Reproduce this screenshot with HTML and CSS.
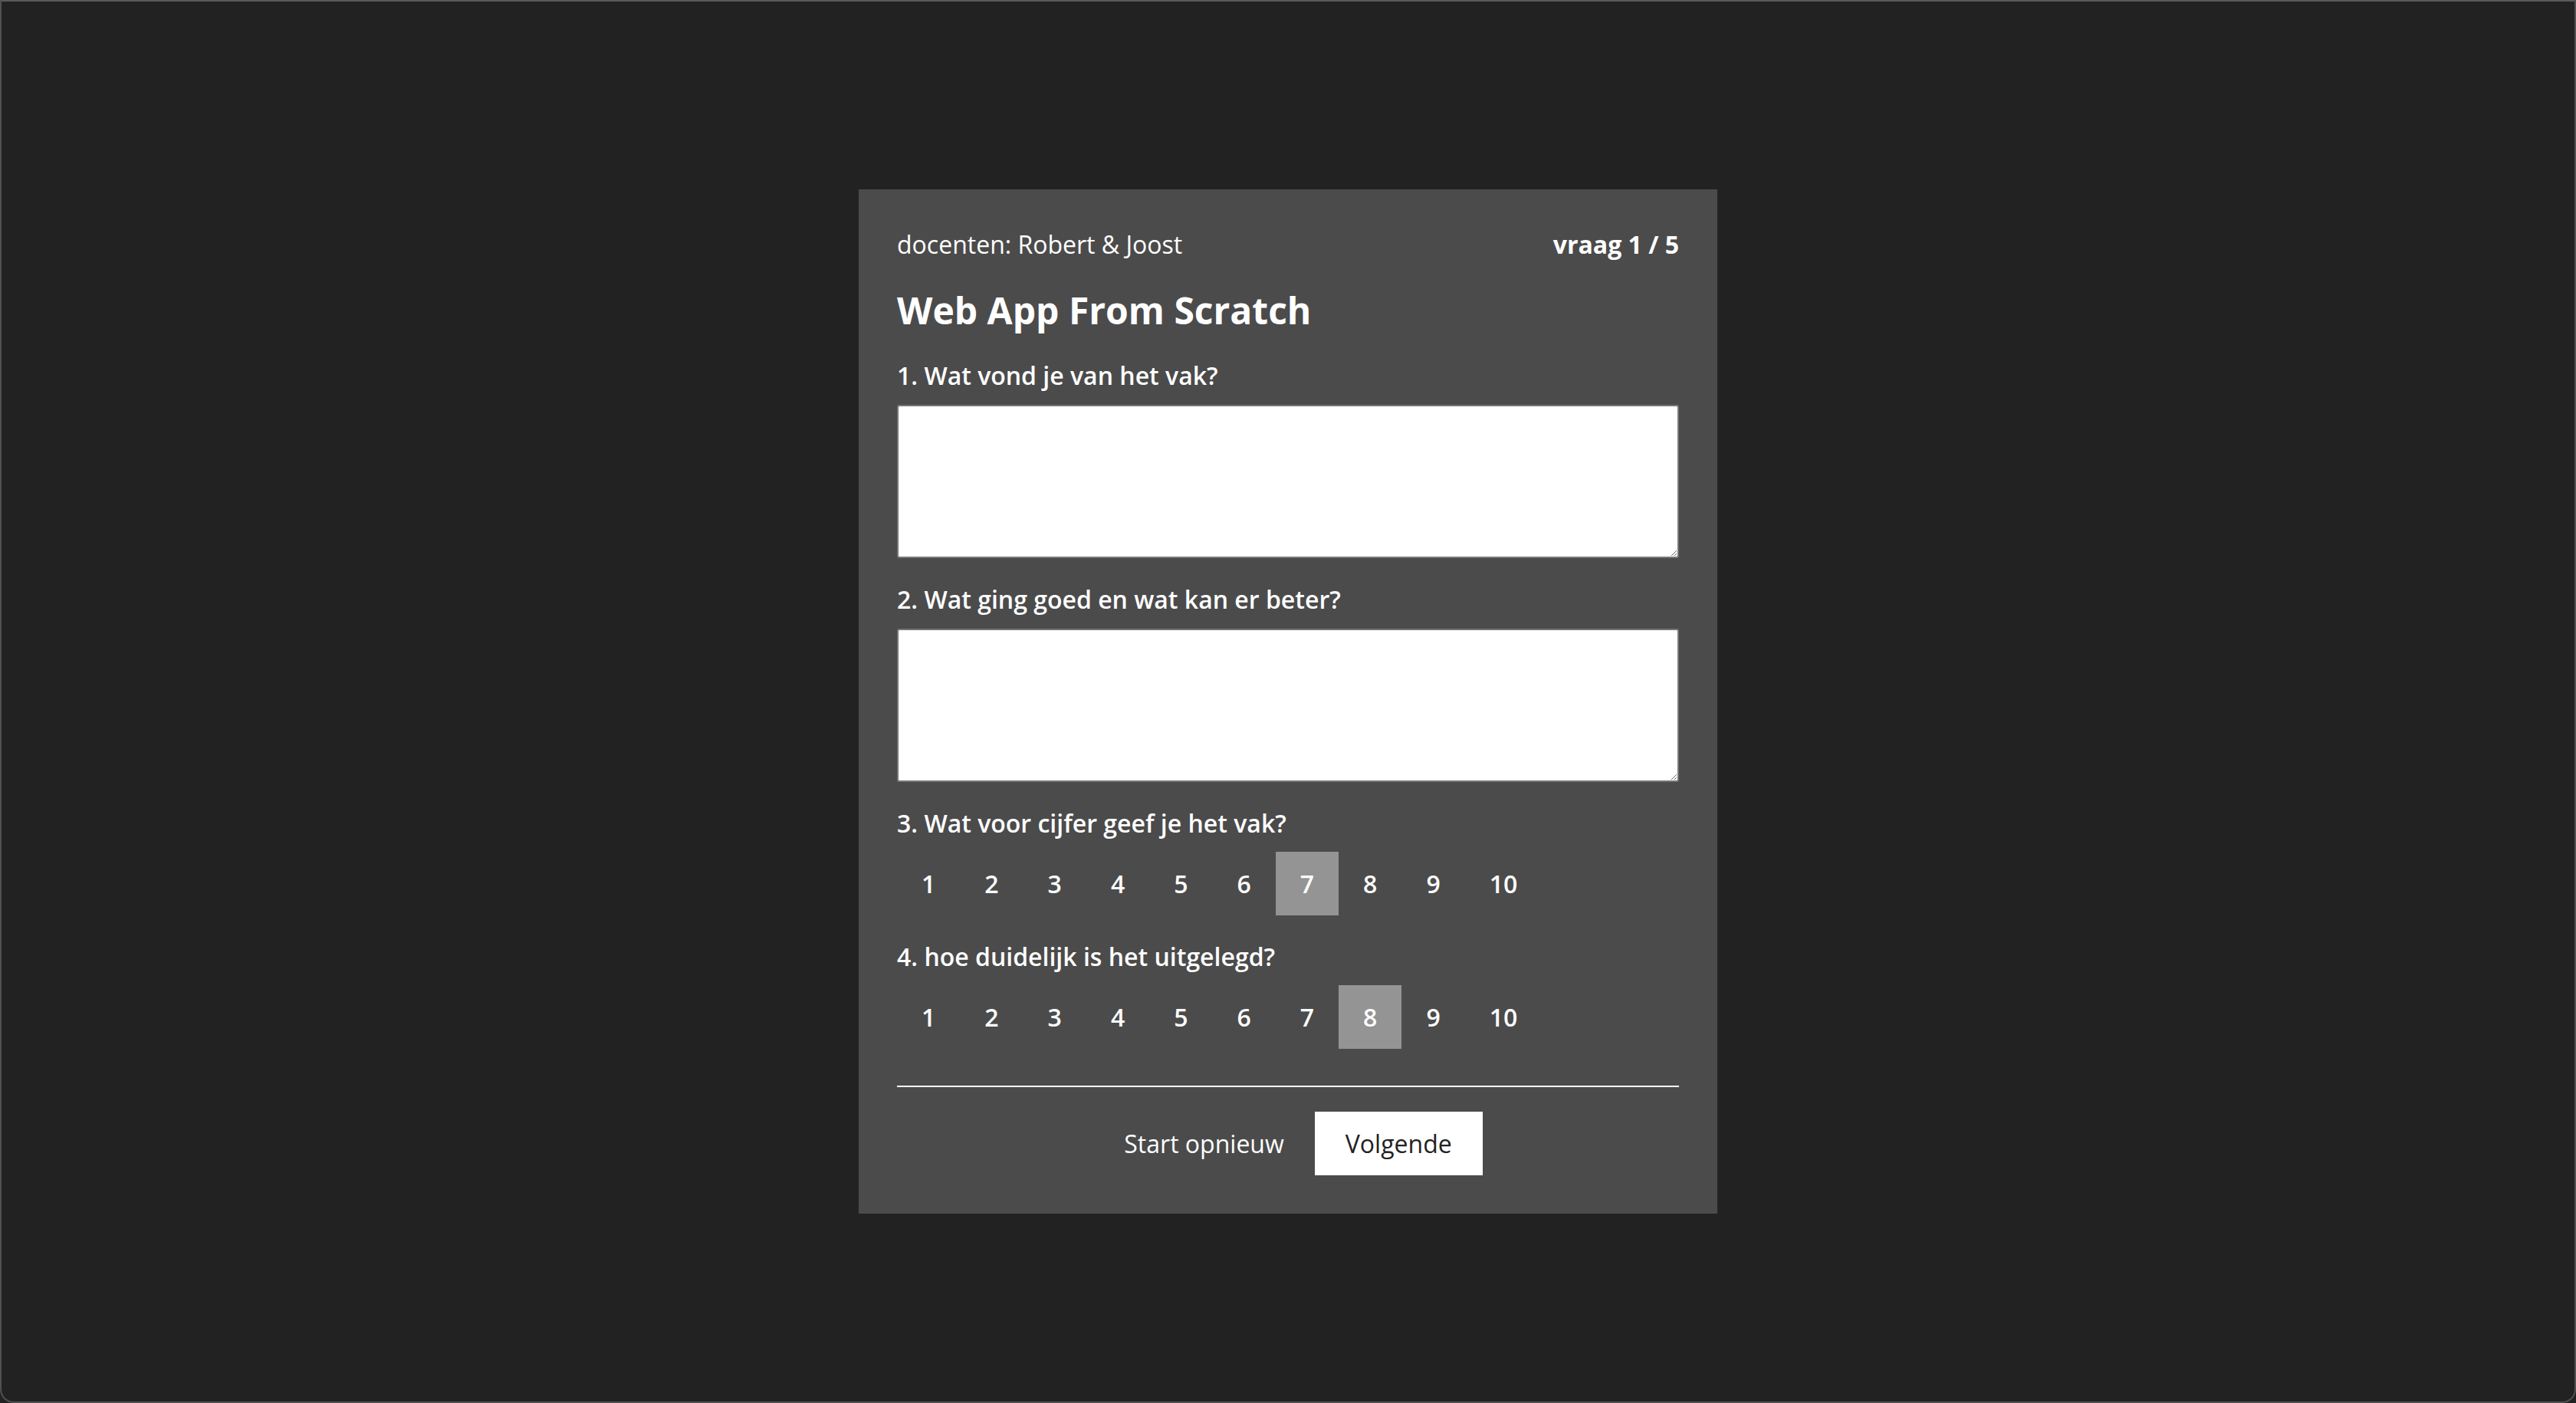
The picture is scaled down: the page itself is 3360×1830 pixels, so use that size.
FILE: index.html
```html
<!DOCTYPE html>
<html lang="nl">
<head>
<meta charset="utf-8">
<title>Web App From Scratch</title>
<link rel="stylesheet" href="styles.css">
</head>
<body>
<div class="window">
  <main class="card">
    <div class="meta">
      <span class="teachers">docenten: Robert &amp; Joost</span>
      <span class="progress">vraag 1 / 5</span>
    </div>
    <h1 class="title">Web App From Scratch</h1>

    <div class="field">
      <label class="label" for="q1">1. Wat vond je van het vak?</label>
      <textarea class="text" id="q1"></textarea>
    </div>

    <div class="field">
      <label class="label" for="q2">2. Wat ging goed en wat kan er beter?</label>
      <textarea class="text" id="q2"></textarea>
    </div>

    <div class="field">
      <div class="label">3. Wat voor cijfer geef je het vak?</div>
      <div class="scale">
        <span class="opt">1</span><span class="opt">2</span><span class="opt">3</span><span class="opt">4</span><span class="opt">5</span><span class="opt">6</span><span class="opt is-active">7</span><span class="opt">8</span><span class="opt">9</span><span class="opt">10</span>
      </div>
    </div>

    <div class="field">
      <div class="label">4. hoe duidelijk is het uitgelegd?</div>
      <div class="scale">
        <span class="opt">1</span><span class="opt">2</span><span class="opt">3</span><span class="opt">4</span><span class="opt">5</span><span class="opt">6</span><span class="opt">7</span><span class="opt is-active">8</span><span class="opt">9</span><span class="opt">10</span>
      </div>
    </div>

    <hr class="rule">

    <div class="actions">
      <button class="btn btn-ghost" type="button">Start opnieuw</button>
      <button class="btn btn-primary" type="button">Volgende</button>
    </div>
  </main>
</div>
</body>
</html>
```

FILE: styles.css
```css
* {
  box-sizing: border-box;
}

html, body {
  margin: 0;
  padding: 0;
  background: #222222;
}

body {
  font-family: "Open Sans", "Noto Sans", sans-serif;
  font-size: 32px;
  color: #ffffff;
}

.window {
  width: 3360px;
  height: 1830px;
  border: 2px solid #505050;
  border-top-color: #5a5a5c;
  border-radius: 0 0 18px 18px;
  background: #222222;
  display: flex;
  align-items: center;
  justify-content: center;
}

.card {
  width: 1120px;
  background: #4b4b4b;
  padding: 50px 50px 50px;
}

.meta {
  display: flex;
  justify-content: space-between;
  align-items: baseline;
  line-height: normal;
}

.progress {
  font-weight: 700;
}

.title {
  margin: 32px 0 31px;
  font-size: 48px;
  font-weight: 700;
  line-height: normal;
}

.field {
  margin-bottom: 32px;
}

.label {
  display: block;
  font-weight: 600;
  line-height: normal;
  margin-bottom: 17px;
}

.text {
  display: block;
  width: 100%;
  height: 200px;
  margin: 0;
  background: #ffffff;
  border: 2px solid #767676;
  border-radius: 3px;
  font-family: inherit;
  font-size: 28px;
}

.scale {
  display: flex;
  margin-top: -1px;
}

.opt {
  padding: 20px 32px;
  font-weight: 600;
  line-height: normal;
}

.opt.is-active {
  background: #949494;
}

.field:last-of-type {
  margin-bottom: 0;
}

.rule {
  margin: 48px 0 32px;
  border: 0;
  height: 2px;
  background: #ffffff;
}

.actions {
  display: flex;
  justify-content: center;
}

.btn {
  font-family: inherit;
  font-size: 32px;
  line-height: normal;
  padding: 20px 40px;
  border: 0;
  border-radius: 0;
  margin: 0;
}

.btn-ghost {
  background: transparent;
  color: #ffffff;
}

.btn-primary {
  background: #ffffff;
  color: #222222;
}
```
